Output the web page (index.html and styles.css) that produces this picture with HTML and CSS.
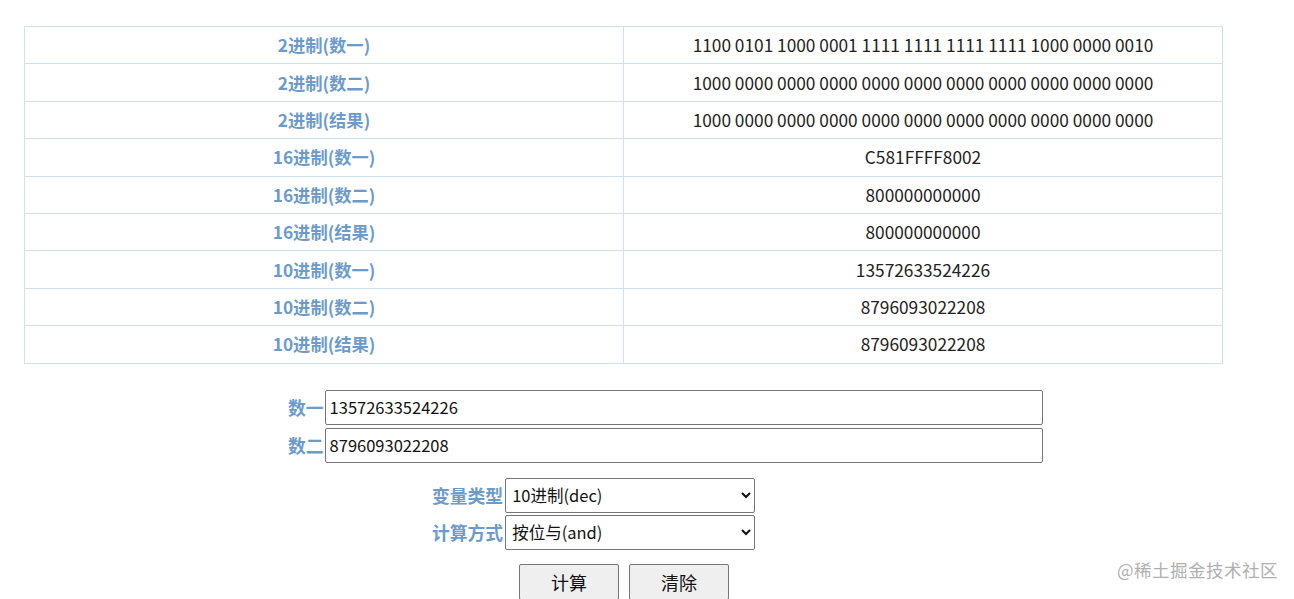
FILE: index.html
```html
<!DOCTYPE html>
<html lang="zh">

<head>
    <meta charset="UTF-8">
    <meta name="viewport" content="width=device-width, initial-scale=1.0">
    <title>位运算计算器</title>
    <link rel="stylesheet" href="styles.css">
</head>

<body>
    <table class="result-table">
        <tr><th>2进制(数一)</th><td>1100 0101 1000 0001 1111 1111 1111 1111 1000 0000 0010</td></tr>
        <tr><th>2进制(数二)</th><td>1000 0000 0000 0000 0000 0000 0000 0000 0000 0000 0000</td></tr>
        <tr><th>2进制(结果)</th><td>1000 0000 0000 0000 0000 0000 0000 0000 0000 0000 0000</td></tr>
        <tr><th>16进制(数一)</th><td>C581FFFF8002</td></tr>
        <tr><th>16进制(数二)</th><td>800000000000</td></tr>
        <tr><th>16进制(结果)</th><td>800000000000</td></tr>
        <tr><th>10进制(数一)</th><td>13572633524226</td></tr>
        <tr><th>10进制(数二)</th><td>8796093022208</td></tr>
        <tr><th>10进制(结果)</th><td>8796093022208</td></tr>
    </table>

    <div class="form">
        <div class="num-row">
            <label for="num1">数一</label>
            <input type="text" id="num1" value="13572633524226">
        </div>
        <div class="num-row">
            <label for="num2">数二</label>
            <input type="text" id="num2" value="8796093022208">
        </div>

        <div class="opt-row first">
            <label for="type">变量类型</label>
            <select id="type">
                <option>10进制(dec)</option>
                <option>16进制(hex)</option>
                <option>2进制(bin)</option>
            </select>
        </div>
        <div class="opt-row">
            <label for="op">计算方式</label>
            <select id="op">
                <option>按位与(and)</option>
                <option>按位或(or)</option>
                <option>按位异或(xor)</option>
            </select>
        </div>

        <div class="buttons">
            <button>计算</button>
            <button>清除</button>
        </div>
    </div>

    <div class="watermark">@稀土掘金技术社区</div>
</body>

</html>
```

FILE: styles.css
```css
body {
    font-family: "Noto Sans CJK SC", "Noto Sans", sans-serif;
    font-size: 16px;
    color: #222;
    margin: 0;
    padding: 26px 0 0 24px;
    background: #fff;
}

.result-table {
    width: 1199px;
    border-collapse: collapse;
    table-layout: fixed;
}

.result-table th,
.result-table td {
    border: 1px solid #cfe1f1;
    height: 36.4px;
    padding: 0;
    text-align: center;
    font-size: 17.3px;
    line-height: 20px;
}

.result-table th {
    color: #6b9bcc;
    font-weight: bold;
}

.result-table td {
    color: #222;
}

.form {
    margin-top: 26px;
}

.num-row,
.opt-row {
    display: flex;
    align-items: center;
}

.num-row {
    margin-left: 264px;
    margin-bottom: 3px;
}

.opt-row {
    margin-left: 408px;
    margin-bottom: 2px;
}

.opt-row.first {
    margin-top: 15px;
}

label {
    color: #6b9bcc;
    font-weight: bold;
    font-size: 17.8px;
    margin-right: 1px;
}

.opt-row label {
    margin-right: 2px;
}

input {
    width: 718px;
    height: 35px;
    box-sizing: border-box;
    border: 1px solid #767676;
    border-radius: 2px;
    padding: 0 4px;
    font-family: "Noto Sans CJK SC", sans-serif;
    font-size: 16.5px;
    color: #111;
}

select {
    width: 250px;
    height: 35px;
    box-sizing: border-box;
    border: 1px solid #767676;
    border-radius: 2px;
    padding: 0 2px;
    font-family: "Noto Sans CJK SC", sans-serif;
    font-size: 16.5px;
    color: #111;
    background: #fff;
}

.buttons {
    display: flex;
    gap: 10px;
    margin-left: 495px;
    margin-top: 14px;
}

button {
    width: 100px;
    height: 36px;
    border: 1px solid #767676;
    border-radius: 2px;
    background: #efefef;
    font-family: "Noto Sans CJK SC", sans-serif;
    font-size: 18px;
    color: #111;
}

.watermark {
    position: absolute;
    right: 16px;
    top: 557px;
    color: #b0b0b0;
    font-size: 17.5px;
    letter-spacing: 0.5px;
}
```
